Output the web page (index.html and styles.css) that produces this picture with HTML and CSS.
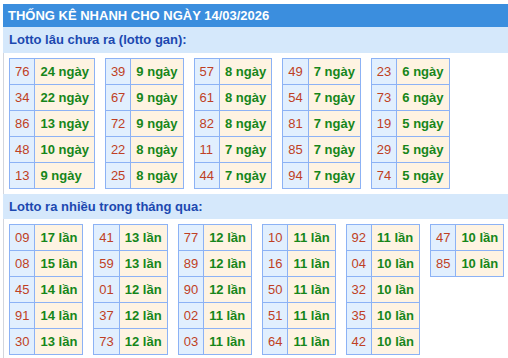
FILE: index.html
```html
<!DOCTYPE html>
<html lang="vi">
<head>
<meta charset="utf-8">
<title>Thống kê nhanh</title>
<link rel="stylesheet" href="styles.css">
</head>
<body>
<div class="box">
  <div class="title">THỐNG KÊ NHANH CHO NGÀY 14/03/2026</div>
  <div class="sub">Lotto lâu chưa ra (lotto gan):</div>
  <div class="grid">
    <table><tr><td class="n">76</td><td class="t">24 ngày</td></tr><tr><td class="n">34</td><td class="t">22 ngày</td></tr><tr><td class="n">86</td><td class="t">13 ngày</td></tr><tr><td class="n">48</td><td class="t">10 ngày</td></tr><tr><td class="n">13</td><td class="t">9 ngày</td></tr></table>
    <table><tr><td class="n">39</td><td class="t">9 ngày</td></tr><tr><td class="n">67</td><td class="t">9 ngày</td></tr><tr><td class="n">72</td><td class="t">9 ngày</td></tr><tr><td class="n">22</td><td class="t">8 ngày</td></tr><tr><td class="n">25</td><td class="t">8 ngày</td></tr></table>
    <table><tr><td class="n">57</td><td class="t">8 ngày</td></tr><tr><td class="n">61</td><td class="t">8 ngày</td></tr><tr><td class="n">82</td><td class="t">8 ngày</td></tr><tr><td class="n">11</td><td class="t">7 ngày</td></tr><tr><td class="n">44</td><td class="t">7 ngày</td></tr></table>
    <table><tr><td class="n">49</td><td class="t">7 ngày</td></tr><tr><td class="n">54</td><td class="t">7 ngày</td></tr><tr><td class="n">81</td><td class="t">7 ngày</td></tr><tr><td class="n">85</td><td class="t">7 ngày</td></tr><tr><td class="n">94</td><td class="t">7 ngày</td></tr></table>
    <table><tr><td class="n">23</td><td class="t">6 ngày</td></tr><tr><td class="n">73</td><td class="t">6 ngày</td></tr><tr><td class="n">19</td><td class="t">5 ngày</td></tr><tr><td class="n">29</td><td class="t">5 ngày</td></tr><tr><td class="n">74</td><td class="t">5 ngày</td></tr></table>
  </div>
  <div class="sub sub-short">Lotto ra nhiều trong tháng qua:</div>
  <div class="grid">
    <table><tr><td class="n">09</td><td class="t">17 lần</td></tr><tr><td class="n">08</td><td class="t">15 lần</td></tr><tr><td class="n">45</td><td class="t">14 lần</td></tr><tr><td class="n">91</td><td class="t">14 lần</td></tr><tr><td class="n">30</td><td class="t">13 lần</td></tr></table>
    <table><tr><td class="n">41</td><td class="t">13 lần</td></tr><tr><td class="n">59</td><td class="t">13 lần</td></tr><tr><td class="n">01</td><td class="t">12 lần</td></tr><tr><td class="n">37</td><td class="t">12 lần</td></tr><tr><td class="n">73</td><td class="t">12 lần</td></tr></table>
    <table><tr><td class="n">77</td><td class="t">12 lần</td></tr><tr><td class="n">89</td><td class="t">12 lần</td></tr><tr><td class="n">90</td><td class="t">12 lần</td></tr><tr><td class="n">02</td><td class="t">11 lần</td></tr><tr><td class="n">03</td><td class="t">11 lần</td></tr></table>
    <table><tr><td class="n">10</td><td class="t">11 lần</td></tr><tr><td class="n">16</td><td class="t">11 lần</td></tr><tr><td class="n">50</td><td class="t">11 lần</td></tr><tr><td class="n">51</td><td class="t">11 lần</td></tr><tr><td class="n">64</td><td class="t">11 lần</td></tr></table>
    <table><tr><td class="n">92</td><td class="t">11 lần</td></tr><tr><td class="n">04</td><td class="t">10 lần</td></tr><tr><td class="n">32</td><td class="t">10 lần</td></tr><tr><td class="n">35</td><td class="t">10 lần</td></tr><tr><td class="n">42</td><td class="t">10 lần</td></tr></table>
    <table><tr><td class="n">47</td><td class="t">10 lần</td></tr><tr><td class="n">85</td><td class="t">10 lần</td></tr></table>
  </div>
</div>
</body>
</html>
```

FILE: styles.css
```css
html, body {
  margin: 0;
  padding: 0;
  background: #ffffff;
}

body {
  font-family: "Liberation Sans", Arial, sans-serif;
  font-size: 13px;
}

.box {
  margin: 4px 0 0 3px;
}

.title {
  height: 23px;
  line-height: 23px;
  padding-left: 5px;
  background: #3b8ede;
  color: #ffffff;
  font-weight: bold;
  font-size: 13px;
  white-space: nowrap;
}

.sub {
  height: 26px;
  line-height: 26px;
  padding-left: 6px;
  background: #d5e8fb;
  color: #1c48b0;
  font-weight: bold;
  font-size: 13px;
}

.sub-short {
  height: 25px;
  line-height: 25px;
}

.grid {
  display: flex;
  flex-wrap: wrap;
  align-items: flex-start;
  gap: 10px;
  border-left: 1px solid #d3d6dd;
  padding: 5px 0 5px 5px;
}

table {
  border-collapse: collapse;
}

td {
  border: 1px solid #8cb2f5;
  padding: 5px;
  line-height: 15px;
  white-space: nowrap;
}

td.n {
  background: #e1effe;
  color: #bf3f24;
}

td.t {
  background: #fef3e2;
  color: #16861a;
  font-weight: bold;
}
```
